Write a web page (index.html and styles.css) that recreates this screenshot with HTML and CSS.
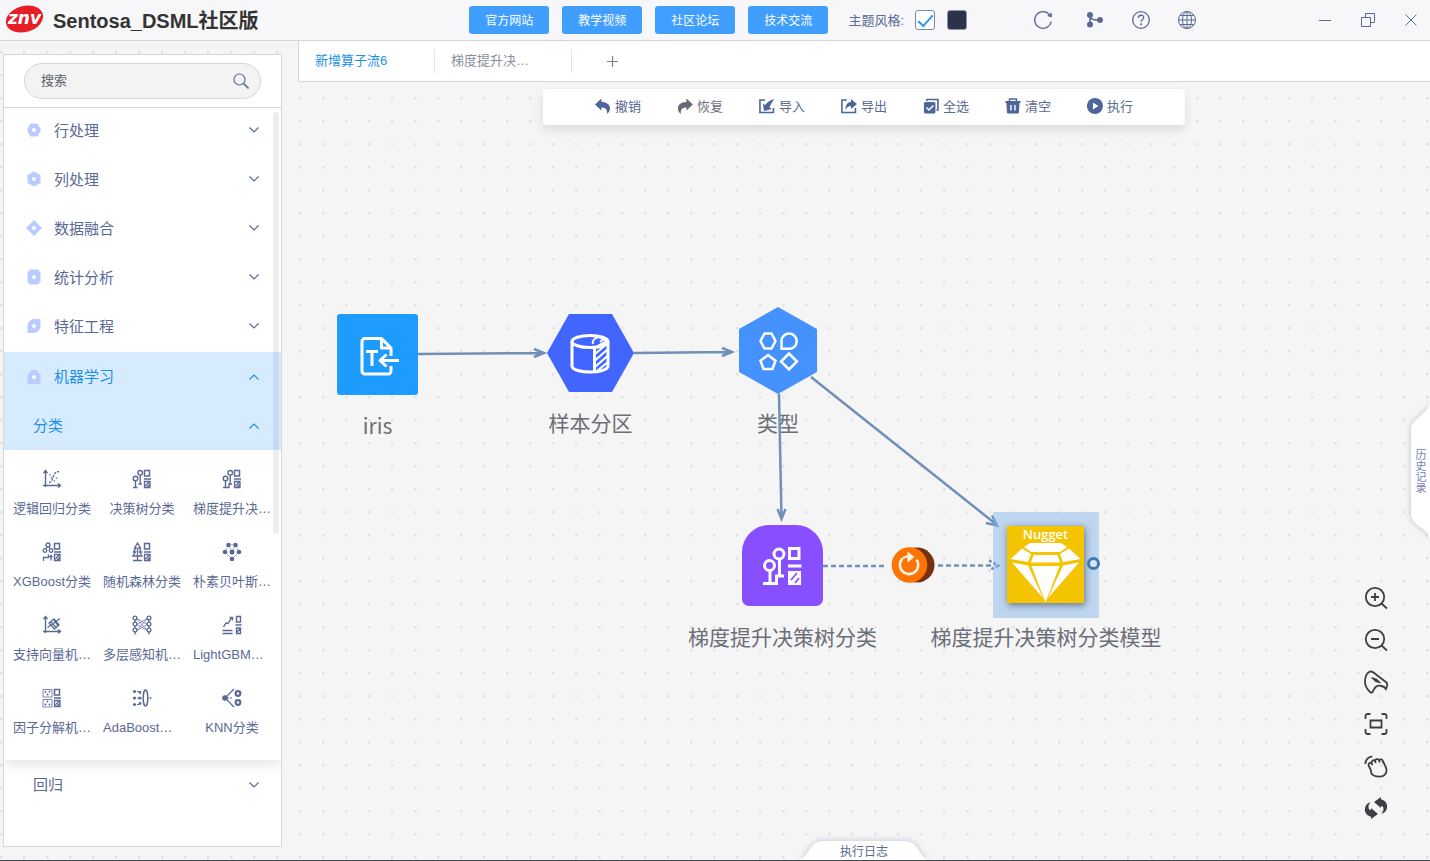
FILE: index.html
```html
<!DOCTYPE html>
<html lang="zh-CN">
<head>
<meta charset="utf-8">
<title>Sentosa_DSML社区版</title>
<link rel="stylesheet" href="styles.css">
</head>
<body>
<svg class="defs" aria-hidden="true">
  <defs>
    <symbol id="chev-down" viewBox="0 0 12 12"><path d="M1.500 3.500 6 8l4.500-4.500" fill="none" stroke="currentColor" stroke-width="1.200"/></symbol>
    <symbol id="chev-up" viewBox="0 0 12 12"><path d="M1.500 8.500 6 4l4.500 4.500" fill="none" stroke="currentColor" stroke-width="1.200"/></symbol>
    <symbol id="classes" viewBox="0 0 20 20">
      <path d="M12.500 1.500h5v5.500h-5zM12 10h7" fill="none" stroke="currentColor" stroke-width="1.500"/>
      <path d="M12.500 12.500h5.500v6h-5.500zM13.500 17l3.500-4M15.500 18l2-2.500" fill="none" stroke="currentColor" stroke-width="1.300"/>
    </symbol>
    <symbol id="axes" viewBox="0 0 20 20"><path d="M3.500 18V1.500M1.500 4l2-2.500 2 2.500M1 16.500h17.500M16 14.500l2.500 2-2.500 2" fill="none" stroke="currentColor" stroke-width="1.400"/></symbol>
  </defs>
</svg>

<header class="topbar">
  <div class="brand">
    <svg class="logo" viewBox="0 0 40 30" role="img" aria-label="znv">
      <ellipse cx="19.500" cy="15" rx="19" ry="13" transform="rotate(-16 19.500 15)" fill="#e61e28"/>
      <text class="logo-text" x="19.500" y="20" text-anchor="middle">znv</text>
    </svg>
    <h1>Sentosa_DSML社区版</h1>
  </div>
  <nav class="links">
    <button type="button">官方网站</button>
    <button type="button">教学视频</button>
    <button type="button">社区论坛</button>
    <button type="button">技术交流</button>
  </nav>
  <div class="theme">
    <span>主题风格:</span>
    <input type="checkbox" class="swatch light" aria-label="浅色主题" checked>
    <input type="checkbox" class="swatch dark" aria-label="深色主题">
  </div>
  <div class="actions">
    <button type="button" class="reload" aria-label="刷新"><svg viewBox="0 0 20 20"><path d="M16.800 5.200A8.300 8.300 0 1 0 18.200 11.500" fill="none" stroke="currentColor" stroke-width="1.300"/><path d="M18.800 2.500v5l-4.600-1.600z" fill="currentColor"/></svg></button>
    <button type="button" aria-label="分支"><svg viewBox="0 0 20 20"><path d="M5 5v10M5 6c1 4 4 4 10 4" fill="none" stroke="currentColor" stroke-width="1.600"/><g fill="currentColor"><circle cx="5" cy="5" r="3"/><circle cx="5" cy="14.500" r="3"/><circle cx="15" cy="10" r="3"/></g></svg></button>
    <button type="button" aria-label="帮助"><svg viewBox="0 0 20 20"><g fill="none" stroke="currentColor" stroke-width="1.300"><circle cx="10" cy="10" r="8.300"/><path d="M7.300 7.900c.1-3.600 5.500-3.400 5.400-.3 0 2-2.700 2.200-2.700 4.500"/></g><circle cx="10" cy="14.300" r="1" fill="currentColor"/></svg></button>
    <button type="button" aria-label="语言"><svg viewBox="0 0 20 20"><g fill="none" stroke="currentColor" stroke-width="1"><circle cx="10" cy="10" r="8.500"/><ellipse cx="10" cy="10" rx="4.500" ry="8.500"/><path d="M10 1.500v17M1.500 10h17M3 5.500h14M3 14.500h14"/></g></svg></button>
  </div>
  <div class="window">
    <button type="button" aria-label="最小化"><svg viewBox="0 0 14 14"><path d="M1 7.500h12" fill="none" stroke="currentColor"/></svg></button>
    <button type="button" aria-label="还原"><svg viewBox="0 0 14 14"><path d="M.500 4.500h9v9h-9zM4.500 4.500v-4h9v9h-4" fill="none" stroke="currentColor"/></svg></button>
    <button type="button" aria-label="关闭"><svg viewBox="0 0 14 14"><path d="M1.500 1.500l11 11M12.500 1.500l-11 11" fill="none" stroke="currentColor"/></svg></button>
  </div>
</header>

<main class="workspace">
  <aside class="panel">
    <form class="search" role="search">
      <div class="search-box">
        <input type="text" placeholder="搜索" aria-label="搜索">
        <button type="button" aria-label="查找"><svg viewBox="0 0 16 16"><circle cx="6.500" cy="6.500" r="5.500" fill="none" stroke="currentColor" stroke-width="1.200"/><path d="M10.500 10.500l5 5" stroke="currentColor" stroke-width="1.600"/></svg></button>
      </div>
    </form>
    <div class="tree">
      <button type="button" class="row"><svg class="mark" viewBox="0 0 16 16"><path d="M4.500 1.500h7L15 8l-3.500 6.500h-7L1 8z"/><circle cx="8" cy="8" r="2"/></svg><span>行处理</span><svg class="chev"><use href="#chev-down"/></svg></button>
      <button type="button" class="row"><svg class="mark" viewBox="0 0 16 16"><path d="M8 .500l6.500 3.500v8L8 15.500 1.500 12V4z"/><circle cx="8" cy="8" r="2"/></svg><span>列处理</span><svg class="chev"><use href="#chev-down"/></svg></button>
      <button type="button" class="row"><svg class="mark" viewBox="0 0 16 16"><path d="M8 0l8 8-8 8-8-8z"/><circle cx="8" cy="8" r="2"/></svg><span>数据融合</span><svg class="chev"><use href="#chev-down"/></svg></button>
      <button type="button" class="row"><svg class="mark" viewBox="0 0 16 16"><path d="M4 .500h8l2.500 3v9l-2.500 3H4l-2.500-3v-9z"/><circle cx="8" cy="8" r="2"/></svg><span>统计分析</span><svg class="chev"><use href="#chev-down"/></svg></button>
      <button type="button" class="row"><svg class="mark" viewBox="0 0 16 16"><path d="M1.500 15V8A7 7 0 0 1 8 1h6.500v6.500A7 7 0 0 1 8 15z"/><circle cx="8" cy="8" r="2"/></svg><span>特征工程</span><svg class="chev"><use href="#chev-down"/></svg></button>
      <button type="button" class="row open first-open" aria-expanded="true"><svg class="mark" viewBox="0 0 16 16"><path d="M1.500 15V6.500L5.500 1h5l4 5.500V15z"/><circle cx="8" cy="8" r="2"/></svg><span>机器学习</span><svg class="chev"><use href="#chev-up"/></svg></button>
      <button type="button" class="row sub open" aria-expanded="true"><span>分类</span><svg class="chev"><use href="#chev-up"/></svg></button>
      <div class="operators">
        <button type="button" class="op"><svg viewBox="0 0 20 20"><use href="#axes"/><path d="M7 13.500c4 0 3-4.500 5-7.500 1-2.500 3-3.500 5-3.500" fill="none" stroke="currentColor" stroke-width="1.300" stroke-dasharray="2.500 1"/><g fill="currentColor"><circle cx="8" cy="6" r=".8"/><circle cx="14.500" cy="9" r=".8"/><circle cx="12.500" cy="12" r=".8"/><circle cx="9.500" cy="9" r=".8"/></g></svg><span>逻辑回归分类</span></button>
        <button type="button" class="op"><svg viewBox="0 0 20 20"><use href="#classes"/><g fill="none" stroke="currentColor" stroke-width="1.400"><circle cx="3.500" cy="9.500" r="2.300"/><circle cx="8.200" cy="3.800" r="2.300"/><path d="M3.500 12v6.500M1 18.500h4.500M8.200 6v9M6.500 15h3.500"/></g></svg><span>决策树分类</span></button>
        <button type="button" class="op"><svg viewBox="0 0 20 20"><use href="#classes"/><g fill="none" stroke="currentColor" stroke-width="1.400"><circle cx="3.500" cy="9.500" r="2.300"/><circle cx="8.200" cy="3.800" r="2.300"/><path d="M3.500 12v6.500M1 18.500h6V15h3M8.200 6v9"/></g></svg><span class="short">梯度提升决…</span></button>
        <button type="button" class="op"><svg viewBox="0 0 20 20"><use href="#classes"/><g fill="none" stroke="currentColor" stroke-width="1.300"><circle cx="6" cy="3" r="2"/><circle cx="3" cy="8.500" r="1.800"/><circle cx="9" cy="8.500" r="1.800"/><path d="M5 5L4 7M7 5l1 2M1.500 19v-3.500h5v-3M9 18.500v-5M7.500 15l1.500-1.500 1.500 1.500"/></g></svg><span>XGBoost分类</span></button>
        <button type="button" class="op"><svg viewBox="0 0 20 20"><use href="#classes"/><path d="M5.500 1L2.500 6h1.500l-2.500 4h2L1 14h9l-2.500-4h2L7 6h1.500zM5.500 6v12.500M1 18.500h9" fill="none" stroke="currentColor" stroke-width="1.300"/></svg><span>随机森林分类</span></button>
        <button type="button" class="op"><svg viewBox="0 0 20 20"><path d="M6.500 3h7l-3.500 7-3.500-7L3 10l7 7 7-7-3.500-7" fill="none" stroke="currentColor" stroke-width=".5"/><g fill="currentColor"><circle cx="6.500" cy="3" r="2.300"/><circle cx="13.500" cy="3" r="2.300"/><circle cx="3" cy="10" r="2.300"/><circle cx="10" cy="10" r="2.500"/><circle cx="17" cy="10" r="2.300"/><circle cx="10" cy="17" r="2.300"/></g></svg><span class="short">朴素贝叶斯…</span></button>
        <button type="button" class="op"><svg viewBox="0 0 20 20"><use href="#axes"/><g fill="none" stroke="currentColor" stroke-width="1.300"><path d="M7 8l5-4 5 6-4.500 4zM9 7l5 5.500M12 5l4 6M5.500 12.500L18 3.500"/></g></svg><span class="short">支持向量机…</span></button>
        <button type="button" class="op"><svg viewBox="0 0 20 20"><g fill="none" stroke="currentColor"><path d="M5 3.500l10 6M5 9.500l10-6M5 9.500l10 6M5 15.500l10-6M5 4l10 11M5 15L15 4" stroke-width=".7"/><g stroke-width="1.300"><circle cx="3" cy="3" r="1.900"/><circle cx="3" cy="9" r="1.900"/><circle cx="3" cy="15" r="1.900"/><circle cx="17" cy="3" r="1.900"/><circle cx="17" cy="9" r="1.900"/><circle cx="17" cy="15" r="1.900"/><path d="M3 5v2M3 11v2M3 17v2.500M17 5v2M17 11v2M17 17v2.500"/></g></g></svg><span class="short">多层感知机…</span></button>
        <button type="button" class="op"><svg viewBox="0 0 20 20"><g fill="none" stroke="currentColor" stroke-width="1.400"><path d="M1.500 12L4 8l2 .5L10 2M7.500 2.500H10.500v3M.500 15.500h10M.500 18.500h10M14.500 1.500h4v5.500h-4zM13.500 10h6M14.500 13h4v5.500h-4zM15 17l3-3"/></g></svg><span class="short">LightGBM…</span></button>
        <button type="button" class="op"><svg viewBox="0 0 20 20"><use href="#classes"/><path d="M1 1.500h9V9H1zM1 11.500h9V19H1z" fill="none" stroke="currentColor" stroke-width=".8"/><g fill="currentColor"><circle cx="3.500" cy="4" r=".9"/><circle cx="7.500" cy="3.500" r=".9"/><circle cx="5.500" cy="6.500" r="1"/><circle cx="3.500" cy="16.500" r="1"/><circle cx="7.500" cy="16.500" r="1"/><circle cx="5.500" cy="13.500" r=".9"/></g></svg><span class="short">因子分解机…</span></button>
        <button type="button" class="op"><svg viewBox="0 0 20 20"><g fill="currentColor"><circle cx="2.500" cy="3.500" r="1.600"/><circle cx="2.500" cy="10" r="1.600"/><circle cx="2.500" cy="16.500" r="1.600"/><circle cx="8" cy="4.500" r="1.400"/><circle cx="8" cy="10" r="1.600"/><circle cx="8" cy="15.500" r="1.400"/><circle cx="18.500" cy="10" r="1"/></g><g fill="none" stroke="currentColor" stroke-width="1"><ellipse cx="13.500" cy="10" rx="2.300" ry="8" stroke-width="1.500"/><path d="M2 3.500h5M2 10h6M2 16.500h5" stroke-dasharray="2 1"/></g></svg><span class="short">AdaBoost…</span></button>
        <button type="button" class="op"><svg viewBox="0 0 20 20"><circle cx="3" cy="10" r="2.800" fill="currentColor"/><g fill="none" stroke="currentColor"><path d="M3 10L12 1M3 10l9 9" stroke-width="1.200"/><path d="M5 10h6" stroke-dasharray="2 1"/><circle cx="16" cy="5.500" r="2.300" stroke-width="2.200"/><circle cx="16" cy="14.500" r="2.300" stroke-width="2.200"/></g></svg><span>KNN分类</span></button>
      </div>
      <button type="button" class="row sub"><span>回归</span><svg class="chev"><use href="#chev-down"/></svg></button>
    </div>
    <div class="scroll-thumb"></div>
  </aside>

  <section class="editor">
    <div class="tabs" role="tablist">
      <button type="button" class="tab active" role="tab" aria-selected="true">新增算子流6</button>
      <button type="button" class="tab" role="tab">梯度提升决…</button>
      <button type="button" class="add" aria-label="新增"><svg viewBox="0 0 11 11"><path d="M5.500 0v11M0 5.500h11" stroke="currentColor" stroke-width="1.200"/></svg></button>
    </div>

    <div class="canvas">
      <div class="node iris">
        <svg viewBox="0 0 81 81"><rect width="81" height="81" rx="3" fill="#1e9bff"/><g fill="none" stroke="#fff" stroke-width="3" stroke-linejoin="round"><path d="M54 42v-8L44.500 24.500H28a3 3 0 0 0-3 3V57a3 3 0 0 0 3 3h23a3 3 0 0 0 3-3v-5"/><path d="M44.500 24.500V34H54M62 46.500H43M49.500 40.500l-6.500 6 6.500 6"/><path d="M29 37.500h12M35 37.500V52"/></g></svg>
        <span>iris</span>
      </div>
      <div class="node sample">
        <svg viewBox="0 0 87 78"><path d="M22 0h43l22 39-22 39H22L0 39z" fill="#4264ff"/><g fill="none" stroke="#fff" stroke-width="3"><ellipse cx="43" cy="27.500" rx="18" ry="6"/><path d="M25 27.500V52c0 8 36 8 36 0V27.500M47.500 33v24.500"/><path d="M46 30c-1-3 1-6 6-7l8 4-10 5.500" stroke-width="2"/><path d="M48 40L61 29M48 46.500L61 35M48 53L61 41.500M50 57L61 48M53 28l5-4" stroke-width="2.200"/></g></svg>
        <span>样本分区</span>
      </div>
      <div class="node type">
        <svg viewBox="0 0 78 87"><path d="M39 0l39 22v43L39 87 0 65V22z" fill="#4592ff"/><g fill="none" stroke="#fff" stroke-width="2.500"><path d="M21.500 34l4-7.500h7l4 7.500-4 7.500h-7zM42.500 41.800V34a7.600 7.600 0 1 1 7.600 7.800zM29 48l7.500 5.700-3 8.300h-9l-3-8.300zM50 46.500l8 8-8 8-8-8z"/></g></svg>
        <span>类型</span>
      </div>
      <div class="node gbdt">
        <svg viewBox="0 0 81 81"><path d="M0 27A27 27 0 0 1 27 0h27a27 27 0 0 1 27 27v47a7 7 0 0 1-7 7H7a7 7 0 0 1-7-7z" fill="#874fff"/><g fill="none" stroke="#fff" stroke-width="3"><circle cx="27.500" cy="40.500" r="5"/><circle cx="37" cy="29" r="5"/><path d="M28 46v12.500M21 58.500h13.500V51H42M37.500 34v17M47.500 23.500h9.500v10h-9.500zM46 41h13.500"/></g><path d="M46 46h13v14H46z" fill="#fff"/><path d="M49 55l6-7M53 58l4-5" stroke="#874fff" stroke-width="1.800"/></svg>
        <span>梯度提升决策树分类</span>
      </div>

      <svg class="edges" aria-hidden="true">
        <g transform="translate(-298 -82)">
          <g fill="none" stroke="#7190b8" stroke-width="2.500">
            <path d="M418 354l125-1M534 349l10 4-10 4"/>
            <path d="M634 353l97-1M722 348l10 4-10 4"/>
            <path d="M779 394l2.500 124M777.500 509l4 10 4-10"/>
            <path d="M811 377l186 148M992 515.500l5 10-11-2.500"/>
            <path d="M823 566h64M938 565.500h56" stroke-dasharray="5 3"/>
            <path d="M989 560.500l9 5-9 5" stroke-dasharray="3 2"/>
          </g>
          <ellipse cx="917" cy="565" rx="17.500" ry="17.500" fill="#76300f"/>
          <circle cx="909.500" cy="565" r="17.800" fill="#fd7304"/>
          <path d="M902.500 558.500a9.200 9.200 0 1 0 14 1" fill="none" stroke="#fff4e8" stroke-width="2.600"/>
          <path d="M907.500 551.500l7 5.500-7 5.500z" fill="#fff4e8"/><path d="M903 558l5-2" stroke="#fff4e8" stroke-width="2"/>
        </g>
      </svg>

      <div class="node model">
        <div class="selection">
          <div class="nugget">
            <b>Nugget</b>
            <svg viewBox="0 0 77 77"><path fill="#fff" d="M17 21l6-4h31l6 4-7 5H24zM3.500 33L15 22.500l9 5.500-3 8zM73.500 33L62 22.500 53 28l3 8zM26.500 29h24l2.500 7.500H24zM5 36.500l16 3L36 72zM72 36.500l-16 3L41 72zM24.500 40h28l-14 36.500z"/></svg>
          </div>
          <i class="port"></i>
        </div>
        <span>梯度提升决策树分类模型</span>
      </div>

      <div class="toolbar">
        <button type="button"><svg viewBox="0 0 16 16"><path d="M0 6.500L6.500.500v3.500C12 4 15.500 7 15 11c-.2 2-1.500 4-3 5 .8-4-1-6.500-5.500-6.500v3z"/></svg>撤销</button>
        <button type="button" class="redo"><svg viewBox="0 0 16 16"><path d="M16 6.500L9.500.500v3.500C4 4 .5 7 1 11c.2 2 1.500 4 3 5-.8-4 1-6.500 5.500-6.500v3z"/></svg>恢复</button>
        <button type="button"><svg viewBox="0 0 16 16"><path d="M6 2H1v12.500h13.500V10" fill="none" stroke="currentColor" stroke-width="1.600"/><path d="M4 5.500l2 1.500C8 4.500 11 2 15.500 1 13 4 11.500 7 10.500 9.500l2.500 1.500-8 2z"/></svg>导入</button>
        <button type="button"><svg viewBox="0 0 16 16"><path d="M6 2H1v12.500h13.500V10" fill="none" stroke="currentColor" stroke-width="1.600"/><path d="M10 1l6 5-6 5V8C7.500 8 6 9 4.500 12 4.500 7 6.500 4 10 4z"/></svg>导出</button>
        <button type="button"><svg viewBox="0 0 16 16"><path d="M4 3V1.500h11V12h-1.500" fill="none" stroke="currentColor" stroke-width="1.600"/><rect x="1" y="4" width="11.500" height="11.500" rx="1.500"/><path d="M3.500 9.500l2.500 2.500 4.500-4.500" fill="none" stroke="#fff" stroke-width="1.500"/></svg>全选</button>
        <button type="button"><svg viewBox="0 0 16 16"><path d="M.500 3h15v2h-1l-.5 9.500a1 1 0 0 1-1 1H3a1 1 0 0 1-1-1L1.500 5h-1z"/><path d="M4.500 3V1h7v2" fill="none" stroke="currentColor" stroke-width="1.400"/><path d="M6 7v5.500M10 7v5.500" stroke="#fff" stroke-width="1.400"/></svg>清空</button>
        <button type="button"><svg viewBox="0 0 16 16"><circle cx="8" cy="8" r="8"/><path d="M6 4.500l5.500 3.500L6 11.500z" fill="#fff"/></svg>执行</button>
      </div>

      <div class="view-tools">
        <button type="button" aria-label="放大"><svg viewBox="0 0 24 24"><circle cx="11" cy="11" r="9.200"/><path d="M7 11h8M11 7v8M17.500 17.500l5.500 5"/></svg></button>
        <button type="button" aria-label="缩小"><svg viewBox="0 0 24 24"><circle cx="11" cy="11" r="9.200"/><path d="M7 11h8M17.500 17.500l5.500 5"/></svg></button>
        <button type="button" aria-label="选择"><svg viewBox="0 0 24 24"><path d="M5 2c1.500-1 3-.5 4.500.5l13 10c1.500 1.500 1 3-.5 6.500-2-3.500-9-5-11.500-.5L8.500 22c-1 1-2 .5-2.500 0C3 19 1 16 1 12 1 8 2.500 3.500 5 2z"/><path d="M9 8.500c1.500 2 3.500 3.200 6 3.500-1.500-1.700-3.500-3-6-3.500z"/></svg></button>
        <button type="button" aria-label="适应画布"><svg viewBox="0 0 24 24"><path d="M1.500 7V4a2 2 0 0 1 2-2h3M17.500 2h3a2 2 0 0 1 2 2v3M22.500 17v3a2 2 0 0 1-2 2h-3M6.500 22h-3a2 2 0 0 1-2-2v-3M6.500 8.500h11v7h-11z"/></svg></button>
        <button type="button" aria-label="拖动"><svg viewBox="0 0 24 24"><path d="M1.300 10C1.500 6 4 3 8.300 2.300M6.500 15.500l-1.700-3.500c-.8-2 .9-3.800 2.700-3 0-2 1.600-3.500 3.500-2.300.7-1.900 3-2 4-.5 1.300-1.500 3.300-1 4 1l3 6.500c1.800 5-1.500 9-6 9-4.500 0-8-1-9-4.500-.4-1.300.5-2-.5-2.700zM7.500 9l1 2M11 6.700l.8 2.300M15 6.200l.8 2.300M19 7.200v1.800"/></svg></button>
        <button type="button" aria-label="重置"><svg class="solid" viewBox="0 0 24 24"><path d="M10 6l7-5v2.500c4 .5 7 4.500 6 8.500-.5 3-2.500 5-5.500 6 3-4 2.500-8-.5-8v2zM14 18l-7 5v-2.500C3 20 0 16 1 12c.5-3 2.500-5 5.500-6-3 4-2.500 8 .5 8v-2z"/></svg></button>
      </div>

      <button type="button" class="history"><svg viewBox="0 0 20 136" aria-hidden="true"><path d="M20 0C18 12 1 14 1 28v82c0 14 17 14 19 26z"/></svg><span>历史记录</span></button>
      <button type="button" class="log"><svg viewBox="0 0 130 20" aria-hidden="true"><path d="M0 20C10 18 10 1 24 1h82c14 0 14 17 24 19z"/></svg><span>执行日志</span></button>
    </div>
  </section>
</main>
</body>
</html>
```
FILE: styles.css
```css
* { box-sizing: border-box; }

:root {
  --ink: #5a6995;
  --active: #1c8fe8;
  --line: #d6d7dc;
  --dots: radial-gradient(circle at 1px 1px, #e0e1e5 1px, transparent 2px);
}

body {
  margin: 0;
  height: 100vh;
  display: flex;
  flex-direction: column;
  overflow: hidden;
  background: #f5f5f5;
  border-bottom: 1px solid #3f4b4b;
  color: var(--ink);
  font-family: "Liberation Sans", "Noto Sans CJK SC", sans-serif;
  font-size: 13px;
}

button {
  margin: 0;
  padding: 0;
  border: 0;
  background: none;
  color: inherit;
  font: inherit;
  cursor: pointer;
}

svg { display: block; }
.defs { position: absolute; width: 0; height: 0; }

/* Top bar */
.topbar {
  flex: none;
  height: 41px;
  display: flex;
  align-items: center;
  background: #f7f7fa;
  border-bottom: 1px solid var(--line);
}

.brand {
  flex: 1;
  display: flex;
  align-items: center;
  gap: 8px;
  padding: 0 0 2px 5px;
}
.logo { width: 40px; height: 30px; }
.logo-text {
  fill: #fff;
  font: italic bold 17px "DejaVu Sans", sans-serif;
}
.brand h1 {
  margin: 0;
  color: #333;
  font-size: 20px;
  font-weight: 700;
  white-space: nowrap;
}

.links { display: flex; gap: 13px; }
.links button {
  width: 80px;
  height: 28px;
  padding-bottom: 2px;
  border-radius: 3px;
  background: #409eff;
  color: #fff;
  font-size: 12px;
}

.theme {
  display: flex;
  align-items: center;
  margin-left: 20px;
}
.theme span { padding-bottom: 2px; }
.swatch {
  appearance: none;
  width: 20px;
  height: 20px;
  margin: 0 0 0 11px;
  border: 1px solid #7b88a8;
  border-radius: 3px;
  background: #fff;
}
.swatch.light::after {
  content: "";
  display: block;
  width: 13px;
  height: 6px;
  margin: 4px 0 0 2px;
  border: solid #2b95f0;
  border-width: 0 0 2px 2px;
  transform: rotate(-48deg);
}
.swatch.dark {
  margin-left: 12px;
  border-color: #8f96a8;
  background: #2a3349;
}

.actions {
  display: flex;
  gap: 26px;
  margin-left: 66px;
}
.actions .reload { margin-right: 6px; }
.actions svg { width: 20px; height: 20px; }
.window {
  display: flex;
  gap: 29px;
  margin: 0 12px 0 121px;
}
.window svg { width: 14px; height: 14px; }

/* Work area */
.workspace {
  flex: 1;
  min-height: 0;
  display: flex;
  background-image: var(--dots);
  background-size: 23px 23px;
  background-position: 0 10px;
}

.panel {
  position: relative;
  flex: none;
  width: 279px;
  margin: 13px 16px 13px 3px;
  border: 1px solid var(--line);
  background: #fff;
  overflow: hidden;
}

.search {
  padding: 8px 20px;
  border-bottom: 1px solid var(--line);
}
.search-box {
  display: flex;
  align-items: center;
  height: 36px;
  padding: 0 11px 0 16px;
  border: 1px solid #d4d5da;
  border-radius: 18px;
  background: #f3f3f4;
}
.search-box input {
  flex: 1;
  min-width: 0;
  padding: 0 0 2px;
  border: 0;
  outline: 0;
  background: none;
  font: inherit;
}
.search-box input::placeholder { color: #5c5f66; }
.search-box svg { width: 16px; height: 16px; }

.row {
  display: flex;
  align-items: center;
  width: 100%;
  height: 49px;
  padding: 0 21px 0 22px;
  font-size: 15px;
  text-align: left;
}
.row:first-child { height: 46px; padding-bottom: 3px; }
.row span { flex: 1; }
.row.open { background: #d7ebff; color: var(--active); }
.row.first-open { margin-top: 2px; }
.row.sub { padding-left: 29px; }
.row.open span,
.row.sub span { padding-bottom: 3px; }
.mark { width: 16px; height: 16px; margin-right: 12px; }
.mark path { fill: #bccbff; }
.mark circle { fill: #fff; }
.chev { width: 12px; height: 12px; }

.operators {
  display: grid;
  grid-template-columns: repeat(3, 90px);
  row-gap: 23px;
  padding: 19px 2px 22px 3px;
  box-shadow: 0 6px 12px rgba(0, 0, 0, .09);
}
.op {
  display: flex;
  flex-direction: column;
  align-items: center;
  gap: 10px;
}
.op svg { width: 20px; height: 20px; }
.op span {
  line-height: 20px;
  white-space: nowrap;
}
.op .short { width: 78px; text-align: left; }

.scroll-thumb {
  position: absolute;
  top: 57px;
  right: 2px;
  width: 6px;
  height: 422px;
  border-radius: 3px;
  background: rgba(60, 60, 90, .09);
}

/* Editor */
.editor {
  flex: 1;
  min-width: 0;
  display: flex;
  flex-direction: column;
}

.tabs {
  flex: none;
  display: flex;
  align-items: center;
  height: 41px;
  border: solid var(--line);
  border-width: 0 0 1px 1px;
  background: #fff;
}
.tab {
  width: 137px;
  height: 24px;
  padding: 0 16px 3px;
  border-right: 1px solid #e2e3e7;
  color: #8a8f9d;
  text-align: left;
}
.tab.active { width: 136px; color: var(--active); }
.add { padding: 0 35px; color: #7b8091; }
.add svg { width: 11px; height: 11px; }

.canvas {
  position: relative;
  flex: 1;
  min-height: 0;
}

.toolbar {
  position: absolute;
  top: 7px;
  left: 50%;
  transform: translateX(-50%);
  display: flex;
  gap: 36px;
  height: 36px;
  padding: 0 52px 3px;
  border-radius: 4px;
  background: #fff;
  box-shadow: 0 5px 10px rgba(0, 0, 0, .1);
}
.toolbar button {
  display: flex;
  align-items: center;
  gap: 4px;
  white-space: nowrap;
}
.toolbar svg { width: 16px; height: 16px; fill: #4d659a; color: #4d659a; }
.toolbar .redo { color: #6c7284; }
.toolbar .redo svg { fill: #666a74; }

/* Flow nodes */
.node {
  position: absolute;
  display: flex;
  flex-direction: column;
  align-items: center;
  gap: 16px;
  color: #6c6e78;
  font-family: "Noto Sans CJK SC", sans-serif;
  font-size: 21px;
  line-height: 28px;
  white-space: nowrap;
}
.node > svg { width: 100%; }
.iris { left: 39px; top: 232px; width: 81px; }
.sample { left: 249px; top: 232px; width: 87px; }
.type { left: 441px; top: 225px; width: 78px; gap: 14px; }
.gbdt { left: 444px; top: 443px; width: 81px; }
.model { left: 695px; top: 430px; width: 106px; gap: 4px; }

.edges {
  position: absolute;
  inset: 0;
  width: 100%;
  height: 100%;
  pointer-events: none;
}

.selection {
  position: relative;
  width: 106px;
  height: 106px;
  padding: 14px;
  background: rgba(125, 178, 236, .45);
}
.nugget {
  position: relative;
  width: 77px;
  height: 77px;
  background: #f5c400;
  box-shadow: 1px 2px 7px rgba(40, 50, 70, .6);
}
.nugget b {
  position: absolute;
  inset: 0 0 auto;
  color: #fff;
  font: 600 13px/16px "Open Sans", sans-serif;
  text-align: center;
}
.port {
  position: absolute;
  top: 45px;
  right: -1px;
  width: 13px;
  height: 13px;
  border: 3px solid #3f78b5;
  border-radius: 50%;
  background: #d5e5f7;
}

/* Floating controls */
.view-tools {
  position: absolute;
  right: 42px;
  bottom: 40px;
  display: flex;
  flex-direction: column;
  gap: 18px;
}
.view-tools svg {
  width: 24px;
  height: 24px;
  fill: none;
  stroke: #3d3f45;
  stroke-width: 1.8;
}
.view-tools .solid { fill: #3d3f45; stroke: none; }

.history,
.log {
  position: absolute;
  display: flex;
  align-items: center;
  justify-content: center;
}
.history {
  top: 321px;
  right: 0;
  width: 20px;
  height: 136px;
  font-size: 11px;
  color: #7484b4;
}
.log {
  bottom: 0;
  left: 50%;
  width: 130px;
  height: 20px;
  margin-left: -65px;
  font-size: 12px;
}
.history svg,
.log svg {
  position: absolute;
  inset: 0;
  fill: #fff;
  overflow: visible;
  filter: drop-shadow(0 0 3px rgba(90, 100, 150, .35));
}
.history span { position: relative; writing-mode: vertical-rl; }
.log span { position: relative; }
```
